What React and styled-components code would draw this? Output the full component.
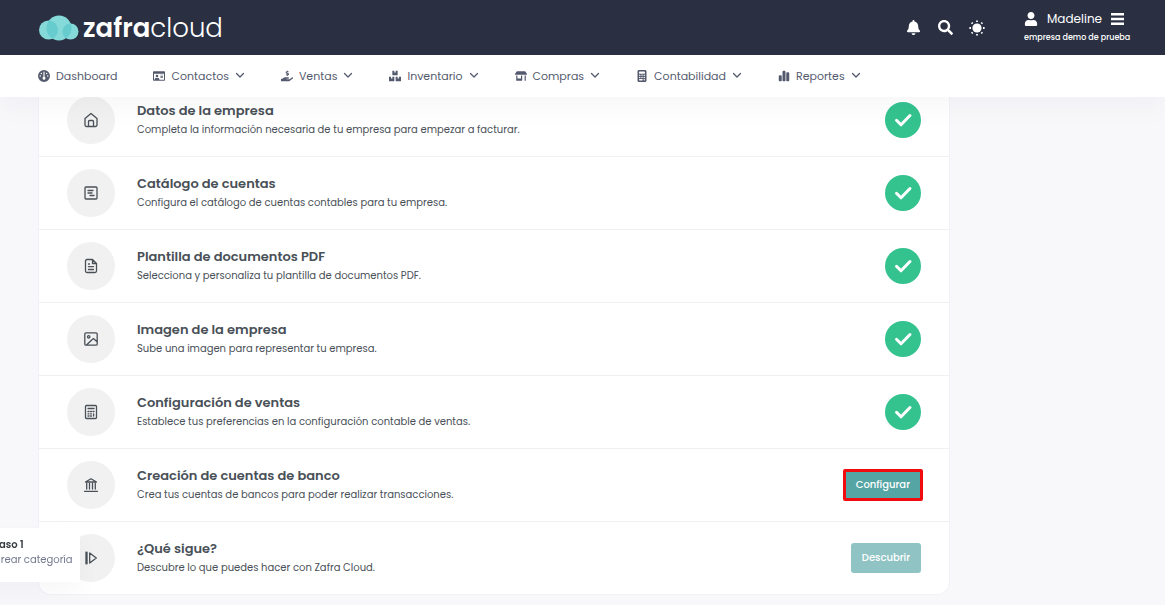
import React from 'react'
import styled, { createGlobalStyle } from 'styled-components'
import {
  FaBell,
  FaSearch,
  FaUser,
  FaRegIdCard,
  FaHandHoldingUsd,
  FaBoxes,
  FaStoreAlt,
} from 'react-icons/fa'
import { FaGauge, FaChartSimple, FaCalculator } from 'react-icons/fa6'

const links = [
  { text: 'Dashboard', icon: <FaGauge /> },
  { text: 'Contactos', icon: <FaRegIdCard />, menu: true },
  { text: 'Ventas', icon: <FaHandHoldingUsd />, menu: true },
  { text: 'Inventario', icon: <FaBoxes />, menu: true },
  { text: 'Compras', icon: <FaStoreAlt />, menu: true },
  { text: 'Contabilidad', icon: <FaCalculator />, menu: true },
  { text: 'Reportes', icon: <FaChartSimple />, menu: true },
]

const steps = [
  {
    title: 'Datos de la empresa',
    desc: 'Completa la información necesaria de tu empresa para empezar a facturar.',
    icon: <path d='M2 6.5 8 1.5l6 5V13a1.5 1.5 0 0 1-1.5 1.5h-9A1.5 1.5 0 0 1 2 13ZM5.5 14V9.5a1 1 0 0 1 1-1h3a1 1 0 0 1 1 1V14' />,
    done: true,
  },
  {
    title: 'Catálogo de cuentas',
    desc: 'Configura el catálogo de cuentas contables para tu empresa.',
    icon: <path d='M3 2h10a1 1 0 0 1 1 1v10a1 1 0 0 1-1 1H3a1 1 0 0 1-1-1V3a1 1 0 0 1 1-1ZM5 5.5h5M5 8h4M7 10.5h4' />,
    done: true,
  },
  {
    title: 'Plantilla de documentos PDF',
    desc: 'Selecciona y personaliza tu plantilla de documentos PDF.',
    icon: <path d='M9.5 1.5H4A1.5 1.5 0 0 0 2.5 3v10A1.5 1.5 0 0 0 4 14.5h8a1.5 1.5 0 0 0 1.5-1.5V5.5ZM9.5 1.5v4h4M5.5 6h1M5.5 8.7h5M5.5 11.5h5' />,
    done: true,
  },
  {
    title: 'Imagen de la empresa',
    desc: 'Sube una imagen para representar tu empresa.',
    icon: <path d='M3 1.8h10A1.2 1.2 0 0 1 14.2 3v10a1.2 1.2 0 0 1-1.2 1.2H3A1.2 1.2 0 0 1 1.8 13V3A1.2 1.2 0 0 1 3 1.8ZM4.5 5.8a1.2 1.2 0 1 0 2.4 0a1.2 1.2 0 1 0-2.4 0M3.5 14 9.5 8.2a1.3 1.3 0 0 1 1.8 0L14 10.7' />,
    done: true,
  },
  {
    title: 'Configuración de ventas',
    desc: 'Establece tus preferencias en la configuración contable de ventas.',
    icon: <path d='M3.5 1.5h9a1 1 0 0 1 1 1v11a1 1 0 0 1-1 1h-9a1 1 0 0 1-1-1v-11a1 1 0 0 1 1-1ZM5 4.5h6M5 7.5h1M7.5 7.5h1M10 7.5h1M5 9.8h1M7.5 9.8h1M5 12h1M7.5 12h1M10.6 9.8V12' />,
    done: true,
  },
  {
    title: 'Creación de cuentas de banco',
    desc: 'Crea tus cuentas de bancos para poder realizar transacciones.',
    icon: <path d='M2.5 5 8 1.8 13.5 5ZM3.7 6.5v5.5M6.5 6.5v5.5M9.5 6.5v5.5M12.3 6.5v5.5M1.5 14.3h13' />,
    button: 'Configurar',
    marked: true,
  },
  {
    title: '¿Qué sigue?',
    desc: 'Descubre lo que puedes hacer con Zafra Cloud.',
    icon: <path d='M3 2.2v11.6M4 2.2v11.6M6.7 3v10l6.6-5Z' />,
    button: 'Descubrir',
    disabled: true,
  },
]

const Logo = () => (
  <Brand href='#' aria-label='zafracloud'>
    <svg width='40' height='26' viewBox='0 0 40 26'>
      <circle cx='9.5' cy='15' r='9.5' fill='#85d9d9' />
      <circle cx='31.5' cy='16.5' r='8' fill='#85d9d9' />
      <circle cx='20' cy='13' r='12.5' fill='#85d9d9' />
      <clipPath id='middle'>
        <circle cx='20' cy='13' r='12.5' />
      </clipPath>
      <g clipPath='url(#middle)' fill='#66cccd'>
        <circle cx='9.5' cy='15' r='9.5' />
        <circle cx='31.5' cy='16.5' r='8' />
      </g>
    </svg>
    <BrandName>
      <b>zafra</b>cloud
    </BrandName>
  </Brand>
)

const Sun = () => (
  <svg width='16' height='16' viewBox='0 0 16 16' fill='currentColor'>
    <circle cx='8' cy='8' r='4.6' />
    <path
      d='M8 .4V2M8 14v1.6M.4 8H2M14 8h1.6M2.6 2.6l1.1 1.1M12.3 12.3l1.1 1.1M2.6 13.4l1.1-1.1M12.3 3.7l1.1-1.1'
      stroke='currentColor'
      strokeWidth='1.8'
    />
  </svg>
)

const Bars = () => (
  <svg width='13' height='12' viewBox='0 0 13 12' fill='currentColor'>
    <path d='M0 0h13v2.4H0zM0 4.8h13v2.4H0zM0 9.6h13V12H0z' />
  </svg>
)

const Arrow = () => (
  <ArrowIcon viewBox='0 0 10 10'>
    <path d='M1.5 2.5 5 6l3.5-3.5' />
  </ArrowIcon>
)

const Step = ({ title, desc, icon, done, button, disabled, marked }) => (
  <Row>
    <Bubble>
      <svg width='16' height='16' viewBox='0 0 16 16'>
        {icon}
      </svg>
    </Bubble>
    <Info>
      <h2>{title}</h2>
      <p>{desc}</p>
    </Info>
    {done ? (
      <Done viewBox='0 0 36 36'>
        <circle cx='18' cy='18' r='18' />
        <path d='M11.5 18.3l4.5 4.5L25 13.5' />
      </Done>
    ) : (
      <Action type='button' disabled={disabled} $marked={marked}>
        {button}
      </Action>
    )}
  </Row>
)

const App = () => {
  return (
    <>
      <GlobalStyle />
      <Header>
        <TopBar>
          <Logo />
          <Tools>
            <IconButton aria-label='Notificaciones'>
              <FaBell />
            </IconButton>
            <IconButton aria-label='Buscar'>
              <FaSearch />
            </IconButton>
            <IconButton aria-label='Tema'>
              <Sun />
            </IconButton>
            <Account type='button'>
              <AccountName>
                <FaUser />
                Madeline
                <Bars />
              </AccountName>
              <small>empresa demo de prueba</small>
            </Account>
          </Tools>
        </TopBar>
        <Nav>
          {links.map(({ text, icon, menu }) => (
            <NavLink href='#' key={text}>
              {icon}
              {text}
              {menu && <Arrow />}
            </NavLink>
          ))}
        </Nav>
      </Header>
      <Main>
        <Card>
          {steps.map((step) => (
            <Step key={step.title} {...step} />
          ))}
        </Card>
      </Main>
      <Hint>
        <strong>Paso 1</strong>
        <span>Crear categoría</span>
      </Hint>
    </>
  )
}

const GlobalStyle = createGlobalStyle`
  * {
    box-sizing: border-box;
  }
  body {
    margin: 0;
    background: #f8f8fb;
    color: #495057;
    font-family: Poppins, Inter, sans-serif;
    overflow: hidden;
  }
  h2, p {
    margin: 0;
  }
  button {
    font-family: inherit;
    border: 0;
    cursor: pointer;
  }
  a {
    color: inherit;
    text-decoration: none;
  }
`

const Header = styled.header`
  position: sticky;
  top: 0;
  z-index: 2;
  box-shadow: 0 12px 24px rgba(18, 38, 63, 0.03);
`

const TopBar = styled.div`
  display: flex;
  align-items: center;
  justify-content: space-between;
  height: 55px;
  padding: 0 30px 0 39px;
  background: #2a3042;
  color: #fff;
`

const Brand = styled.a`
  display: flex;
  align-items: center;
  gap: 4px;
`

const BrandName = styled.span`
  font-size: 26px;
  line-height: 32px;
  font-weight: 300;
  b {
    font-weight: 600;
  }
`

const Tools = styled.div`
  display: flex;
  align-items: center;
`

const IconButton = styled.button`
  display: flex;
  align-items: center;
  justify-content: center;
  width: 32px;
  height: 32px;
  padding: 0;
  background: none;
  color: #fff;
  font-size: 15px;
`

const Account = styled.button`
  display: flex;
  flex-direction: column;
  gap: 3px;
  min-width: 111px;
  margin-left: 31px;
  padding: 0;
  background: none;
  color: #fff;
  text-align: left;
  small {
    font-size: 8px;
    line-height: 14px;
    font-weight: 500;
  }
`

const AccountName = styled.span`
  display: flex;
  align-items: center;
  gap: 9px;
  font-size: 12px;
  line-height: 18px;
  svg {
    font-size: 14px;
    width: auto;
  }
`

const Nav = styled.nav`
  display: flex;
  align-items: center;
  gap: 36px;
  height: 42px;
  padding: 0 38px;
  background: #fff;
`

const NavLink = styled.a`
  display: flex;
  align-items: center;
  gap: 6px;
  color: #545a6d;
  font-size: 11px;
  line-height: 18px;
  svg {
    width: auto;
    height: 12px;
  }
`

const ArrowIcon = styled.svg`
  fill: none;
  stroke: currentColor;
  stroke-width: 1.3;
  stroke-linecap: round;
  stroke-linejoin: round;
  && {
    height: 10px;
  }
`

const Main = styled.main`
  /* the list is scrolled a little under the header */
  margin-top: -13px;
  padding: 0 216px 11px 39px;
`

const Card = styled.section`
  background: #fff;
  border-radius: 0 0 12px 12px;
  box-shadow: 0 0 0 1px #f1f1f7;
`

const Row = styled.article`
  display: flex;
  align-items: center;
  gap: 22px;
  height: 73px;
  padding: 0 28px;
  border-bottom: 1px solid #eff0f3;
  &:last-child {
    height: 72px;
    border-bottom: 0;
  }
`

const Bubble = styled.div`
  display: flex;
  align-items: center;
  justify-content: center;
  width: 48px;
  height: 48px;
  border-radius: 50%;
  background: #f1f1f1;
  svg {
    fill: none;
    stroke: #495057;
    stroke-width: 1.3;
    stroke-linejoin: round;
    stroke-linecap: round;
  }
`

const Info = styled.div`
  display: flex;
  flex: 1;
  flex-direction: column;
  gap: 1px;
  padding-top: 1px;
  h2 {
    font-size: 13px;
    line-height: 18px;
    font-weight: 600;
  }
  p {
    font-size: 10px;
    line-height: 18px;
  }
`

const Done = styled.svg`
  width: 36px;
  height: 36px;
  fill: #34c38f;
  path {
    fill: none;
    stroke: #fff;
    stroke-width: 3;
    stroke-linecap: round;
    stroke-linejoin: round;
  }
`

const Action = styled.button`
  position: relative;
  height: 30px;
  padding: 0 11px;
  border-radius: 3px;
  background: #55a5a5;
  color: #fff;
  font-size: 10px;
  line-height: 18px;
  font-weight: 500;
  &:disabled {
    opacity: 0.65;
  }
  &::after {
    content: '';
    display: ${(props) => (props.$marked ? 'block' : 'none')};
    position: absolute;
    inset: -1px -2px;
    border: 3px solid #f20c10;
    border-radius: 2px;
  }
`

const Hint = styled.aside`
  position: fixed;
  left: -20px;
  bottom: 23px;
  z-index: 1;
  display: flex;
  flex-direction: column;
  width: 100px;
  height: 54px;
  padding: 9px 0 0 13px;
  background: #fff;
  box-shadow: 0 12px 24px rgba(18, 38, 63, 0.03);
  white-space: nowrap;
  font-size: 10px;
  line-height: 15px;
  strong {
    color: #343a40;
    font-weight: 600;
  }
  span {
    color: #74788d;
  }
`

export default App
